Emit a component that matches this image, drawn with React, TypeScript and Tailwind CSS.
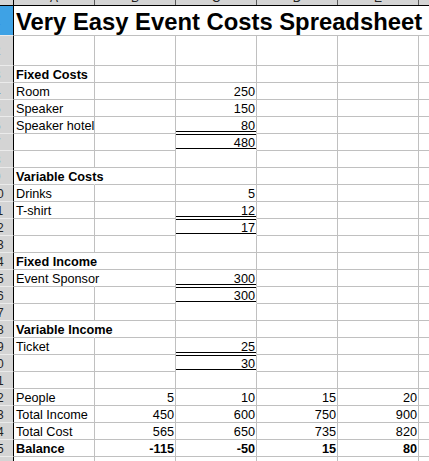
import React from "react";

type Row = {
  n: number;
  h?: "tall";
  a?: string;
  bold?: boolean;
  overflow?: boolean;
  vals?: (string | null)[]; // B..E
  dblTop?: boolean;
  dblBottom?: boolean;
};

const rows: Row[] = [
  { n: 2, h: "tall" },
  { n: 3, a: "Fixed Costs", bold: true },
  { n: 4, a: "Room", vals: [null, "250"] },
  { n: 5, a: "Speaker", vals: [null, "150"] },
  { n: 6, a: "Speaker hotel", vals: [null, "80"], dblBottom: true },
  { n: 7, vals: [null, "480"], dblTop: true, dblBottom: true },
  { n: 8 },
  { n: 9, a: "Variable Costs", bold: true, overflow: true },
  { n: 10, a: "Drinks", vals: [null, "5"] },
  { n: 11, a: "T-shirt", vals: [null, "12"], dblBottom: true },
  { n: 12, vals: [null, "17"], dblTop: true, dblBottom: true },
  { n: 13 },
  { n: 14, a: "Fixed Income", bold: true, overflow: true },
  { n: 15, a: "Event Sponsor", overflow: true, vals: [null, "300"], dblBottom: true },
  { n: 16, vals: [null, "300"], dblTop: true, dblBottom: true },
  { n: 17 },
  { n: 18, a: "Variable Income", bold: true, overflow: true },
  { n: 19, a: "Ticket", vals: [null, "25"], dblBottom: true },
  { n: 20, vals: [null, "30"], dblTop: true, dblBottom: true },
  { n: 21 },
  { n: 22, a: "People", vals: ["5", "10", "15", "20"] },
  { n: 23, a: "Total Income", vals: ["450", "600", "750", "900"] },
  { n: 24, a: "Total Cost", vals: ["565", "650", "735", "820"] },
  { n: 25, a: "Balance", bold: true, vals: ["-115", "-50", "15", "80"] },
  { n: 26 },
];

const LETTERS = ["A", "B", "C", "D", "E", "F"];

function RowHead({ n, blue }: { n: number; blue?: boolean }) {
  return (
    <div
      className={
        "w-[14px] shrink-0 border-r border-r-black border-b border-b-[#ebebeb] overflow-hidden flex items-center " +
        (blue ? "bg-[#3ea2e5]" : "bg-[#d4d4d4]")
      }
    >
      <div className="w-[20px] shrink-0 ml-[-13px] mt-[1px] text-center text-[12px] leading-none text-[#222]">
        {n}
      </div>
    </div>
  );
}

function cShadow(r: Row): string {
  if (r.dblTop && r.dblBottom)
    return "border-b-white shadow-[inset_0_1px_0_0_black,inset_0_-1px_0_0_white,inset_0_-2px_0_0_black]";
  if (r.dblBottom) return "border-b-white shadow-[inset_0_-1px_0_0_white,inset_0_-2px_0_0_black]";
  if (r.dblTop) return "shadow-[inset_0_1px_0_0_black]";
  return "";
}

export default function App() {
  return (
    <div
      className="w-[429px] h-[461px] overflow-hidden bg-white text-black"
      style={{ fontFamily: '"Liberation Sans", Arial, sans-serif' }}
    >
      {/* column header strip */}
      <div className="flex h-[6px] border-b border-b-black bg-[#d4d4d4]">
        <div className="w-[14px] shrink-0 border-r border-r-black" />
        {LETTERS.map((l) => (
          <div
            key={l}
            className="w-[81px] shrink-0 border-r border-r-[#5a5a5a] overflow-hidden"
          >
            <div className="mt-[-9px] h-[14px] leading-[14px] text-[12px] text-center text-[#222]">
              {l}
            </div>
          </div>
        ))}
      </div>

      {/* row 1: title */}
      <div className="flex h-[30px]">
        <RowHead n={1} blue />
        <div className="flex-1 border-b border-b-[#c0c0c0] flex items-end pl-[2px] whitespace-nowrap">
          <span className="text-[23.8px] leading-[26px] font-bold">
            Very Easy Event Costs Spreadsheet
          </span>
        </div>
      </div>

      {rows.map((r) => (
        <div key={r.n} className={"flex " + (r.h === "tall" ? "h-[30px]" : "h-[17px]")}>
          <RowHead n={r.n} />
          {/* A */}
          <div
            className={
              "w-[81px] shrink-0 border-b border-b-[#c0c0c0] flex items-end pl-[2px] whitespace-nowrap text-[12.7px] leading-[13px] " +
              (r.overflow ? "border-r border-r-transparent " : "border-r border-r-[#c0c0c0] ") +
              (r.bold ? "font-bold" : "")
            }
          >
            {r.a ? <span>{r.a}</span> : null}
          </div>
          {[0, 1, 2, 3, 4].map((i) => {
            const v = r.vals ? r.vals[i] : null;
            const isC = i === 1;
            return (
              <div
                key={i}
                className={
                  "w-[81px] shrink-0 border-r border-r-[#c0c0c0] border-b border-b-[#c0c0c0] flex items-end justify-end pr-[1px] whitespace-nowrap text-[12.7px] leading-[13px] " +
                  (r.bold ? "font-bold " : "") +
                  (isC ? cShadow(r) : "")
                }
              >
                {v ? <span>{v}</span> : null}
              </div>
            );
          })}
        </div>
      ))}
    </div>
  );
}
